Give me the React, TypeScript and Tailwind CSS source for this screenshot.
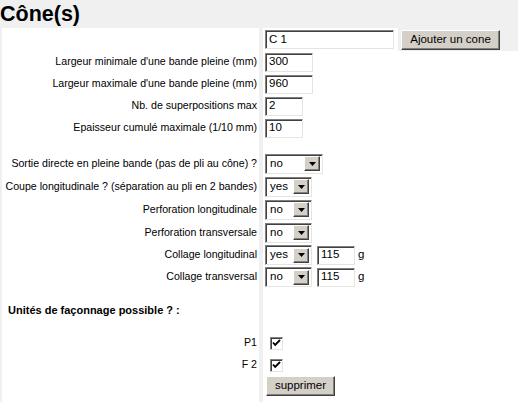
import React from "react";

const inset =
  "border border-t-[#808080] border-l-[#808080] border-b-[#e4e4e4] border-r-[#e4e4e4] shadow-[inset_1px_1px_0_#404040]";
const outset =
  "border border-t-white border-l-white border-b-[#404040] border-r-[#404040] shadow-[inset_-1px_-1px_0_#808080]";

function TextBox({ value, w }: { value: string; w: number }) {
  return (
    <div
      className={`${inset} bg-white h-[19px] flex items-center pl-[3px] text-[11.5px] leading-none text-black`}
      style={{ width: w }}
    >
      {value}
    </div>
  );
}

function Select({ value, w }: { value: string; w: number }) {
  return (
    <div
      className={`${inset} bg-white h-[20px] flex items-center justify-between pl-[4px] pr-[2px] text-[11.5px] leading-none text-black`}
      style={{ width: w }}
    >
      <span>{value}</span>
      <div className={`${outset} bg-[#d4d0c8] w-[16px] h-[15px] flex items-center justify-center`}>
        <svg width="7" height="4" viewBox="0 0 7 4">
          <path d="M0 0h7L3.5 4z" fill="#000" />
        </svg>
      </div>
    </div>
  );
}

function Check() {
  return (
    <div className={`${inset} bg-white w-[13px] h-[13px] flex items-center justify-center`}>
      <svg width="9" height="8" viewBox="0 0 9 8">
        <path d="M1 3.5l2.2 2.4L8 1" stroke="#000" strokeWidth="1.8" fill="none" />
      </svg>
    </div>
  );
}

function Btn({ label, w }: { label: string; w: number }) {
  return (
    <div
      className={`${outset} bg-[#d4d0c8] h-[20px] flex items-center justify-center text-[11.5px] leading-none text-black`}
      style={{ width: w }}
    >
      {label}
    </div>
  );
}

function Row({
  label,
  h,
  children,
  bold,
}: {
  label?: string;
  h: number;
  children?: React.ReactNode;
  bold?: boolean;
}) {
  return (
    <>
      <div
        className={`bg-white flex items-center ${bold ? "justify-start pl-[6px] font-bold text-[11px]" : "justify-end pr-[2px] text-[10.6px]"} text-black whitespace-nowrap`}
        style={{ height: h }}
      >
        {label}
      </div>
      <div className="bg-white flex items-center pl-[2px] gap-[5px]" style={{ height: h }}>
        {children}
      </div>
    </>
  );
}

export default function App() {
  return (
    <div
      className="w-[518px] h-[402px] bg-[#f0f0f0] overflow-hidden"
      style={{ fontFamily: '"Liberation Sans", Arial, sans-serif' }}
    >
      <div className="h-[28px] flex items-center">
        <h1 className="text-[21.5px] font-bold leading-none text-black mt-[2px]">Cône(s)</h1>
      </div>
      <div className="ml-[2px] grid grid-cols-[257px_1fr] gap-x-[4px]">
        {/* row 1 */}
        <div className="bg-white h-[23px]" />
        <div className="h-[23px] flex">
          <div className="bg-white w-[135px] flex items-center pl-[2px]">
            <TextBox value="C 1" w={129} />
          </div>
          <div className="flex items-center pl-[3px]">
            <Btn label="Ajouter un cone" w={99} />
          </div>
        </div>
        <Row label="Largeur minimale d'une bande pleine (mm)" h={22}>
          <TextBox value="300" w={48} />
        </Row>
        <Row label="Largeur maximale d'une bande pleine (mm)" h={22}>
          <TextBox value="960" w={48} />
        </Row>
        <Row label="Nb. de superpositions max" h={22}>
          <TextBox value="2" w={38} />
        </Row>
        <Row label="Epaisseur cumulé maximale (1/10 mm)" h={22}>
          <TextBox value="10" w={38} />
        </Row>
        <Row h={13} />
        <Row label="Sortie directe en pleine bande (pas de pli au cône) ?" h={23}>
          <Select value="no" w={58} />
        </Row>
        <Row label="Coupe longitudinale ? (séparation au pli en 2 bandes)" h={23}>
          <Select value="yes" w={47} />
        </Row>
        <Row label="Perforation longitudinale" h={23}>
          <Select value="no" w={47} />
        </Row>
        <Row label="Perforation transversale" h={23}>
          <Select value="no" w={47} />
        </Row>
        <Row label="Collage longitudinal" h={22}>
          <Select value="yes" w={47} />
          <TextBox value="115" w={38} />
          <span className="text-[11.5px] text-black -ml-[2px]">g</span>
        </Row>
        <Row label="Collage transversal" h={22}>
          <Select value="no" w={47} />
          <TextBox value="115" w={38} />
          <span className="text-[11.5px] text-black -ml-[2px]">g</span>
        </Row>
        <Row h={12} />
        <Row label="Unités de façonnage possible ? :" h={20} bold />
        <Row h={12} />
        <Row label="P1" h={22}>
          <div className="pl-[5px]">
            <Check />
          </div>
        </Row>
        <Row label="F 2" h={22}>
          <div className="pl-[5px]">
            <Check />
          </div>
        </Row>
        <Row h={26}>
          <div className="self-start pt-0 pl-[1px]">
            <Btn label="supprimer" w={69} />
          </div>
        </Row>
      </div>
    </div>
  );
}
